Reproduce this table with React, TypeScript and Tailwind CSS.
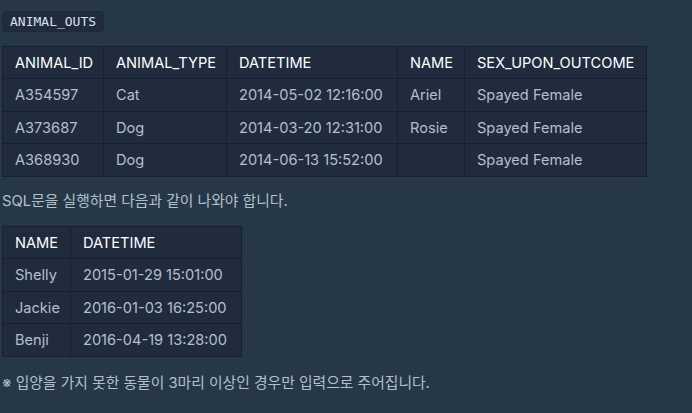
import React from "react";

const outs = [
  ["A354597", "Cat", "2014-05-02 12:16:00", "Ariel", "Spayed Female"],
  ["A373687", "Dog", "2014-03-20 12:31:00", "Rosie", "Spayed Female"],
  ["A368930", "Dog", "2014-06-13 15:52:00", "", "Spayed Female"],
];

const result = [
  ["Shelly", "2015-01-29 15:01:00"],
  ["Jackie", "2016-01-03 16:25:00"],
  ["Benji", "2016-04-19 13:28:00"],
];

function Table({
  head,
  rows,
  widths,
  width,
}: {
  head: string[];
  rows: string[][];
  widths: string[];
  width: string;
}) {
  return (
    <table className={`${width} table-fixed border-collapse bg-[#202b3d] text-[14.6px] leading-[22px] whitespace-nowrap`}>
      <thead>
        <tr>
          {head.map((h, i) => (
            <th
              key={h}
              className={`${widths[i]} h-[32px] border border-[#172030] px-3 text-left font-normal text-white`}
            >
              {h}
            </th>
          ))}
        </tr>
      </thead>
      <tbody>
        {rows.map((r, ri) => (
          <tr key={ri}>
            {r.map((c, ci) => (
              <td key={ci} className="h-[32.7px] border border-[#172030] px-3 text-[#b2c0cc]">
                {c}
              </td>
            ))}
          </tr>
        ))}
      </tbody>
    </table>
  );
}

export default function App() {
  return (
    <div
      className="min-h-screen w-full bg-[#263747] px-[2px] pt-[11px] text-[#b2c0cc]"
      style={{ fontFamily: "Inter, 'Noto Sans CJK KR', sans-serif" }}
    >
      <div className="flex">
        <code
          className="rounded-[4px] border border-[#1e2938] bg-[#202b3d] px-[7px] py-[1px] text-[13px] leading-[17px] text-[#d7e2eb]"
          style={{ fontFamily: "'DejaVu Sans Mono', monospace" }}
        >
          ANIMAL_OUTS
        </code>
      </div>

      <div className="mt-[14px]">
        <Table
          width="w-[644px]"
          head={["ANIMAL_ID", "ANIMAL_TYPE", "DATETIME", "NAME", "SEX_UPON_OUTCOME"]}
          rows={outs}
          widths={["w-[101px]", "w-[123px]", "w-[171px]", "w-[67px]", "w-[182px]"]}
        />
      </div>

      <p className="mt-[13px] text-[14.8px] leading-[22px]">SQL문을 실행하면 다음과 같이 나와야 합니다.</p>

      <div className="mt-[14px]">
        <Table
          width="w-[239px]"
          head={["NAME", "DATETIME"]}
          rows={result}
          widths={["w-[68px]", "w-[171px]"]}
        />
      </div>

      <p className="mt-[15px] text-[14.8px] leading-[22px]">※ 입양을 가지 못한 동물이 3마리 이상인 경우만 입력으로 주어집니다.</p>
    </div>
  );
}
